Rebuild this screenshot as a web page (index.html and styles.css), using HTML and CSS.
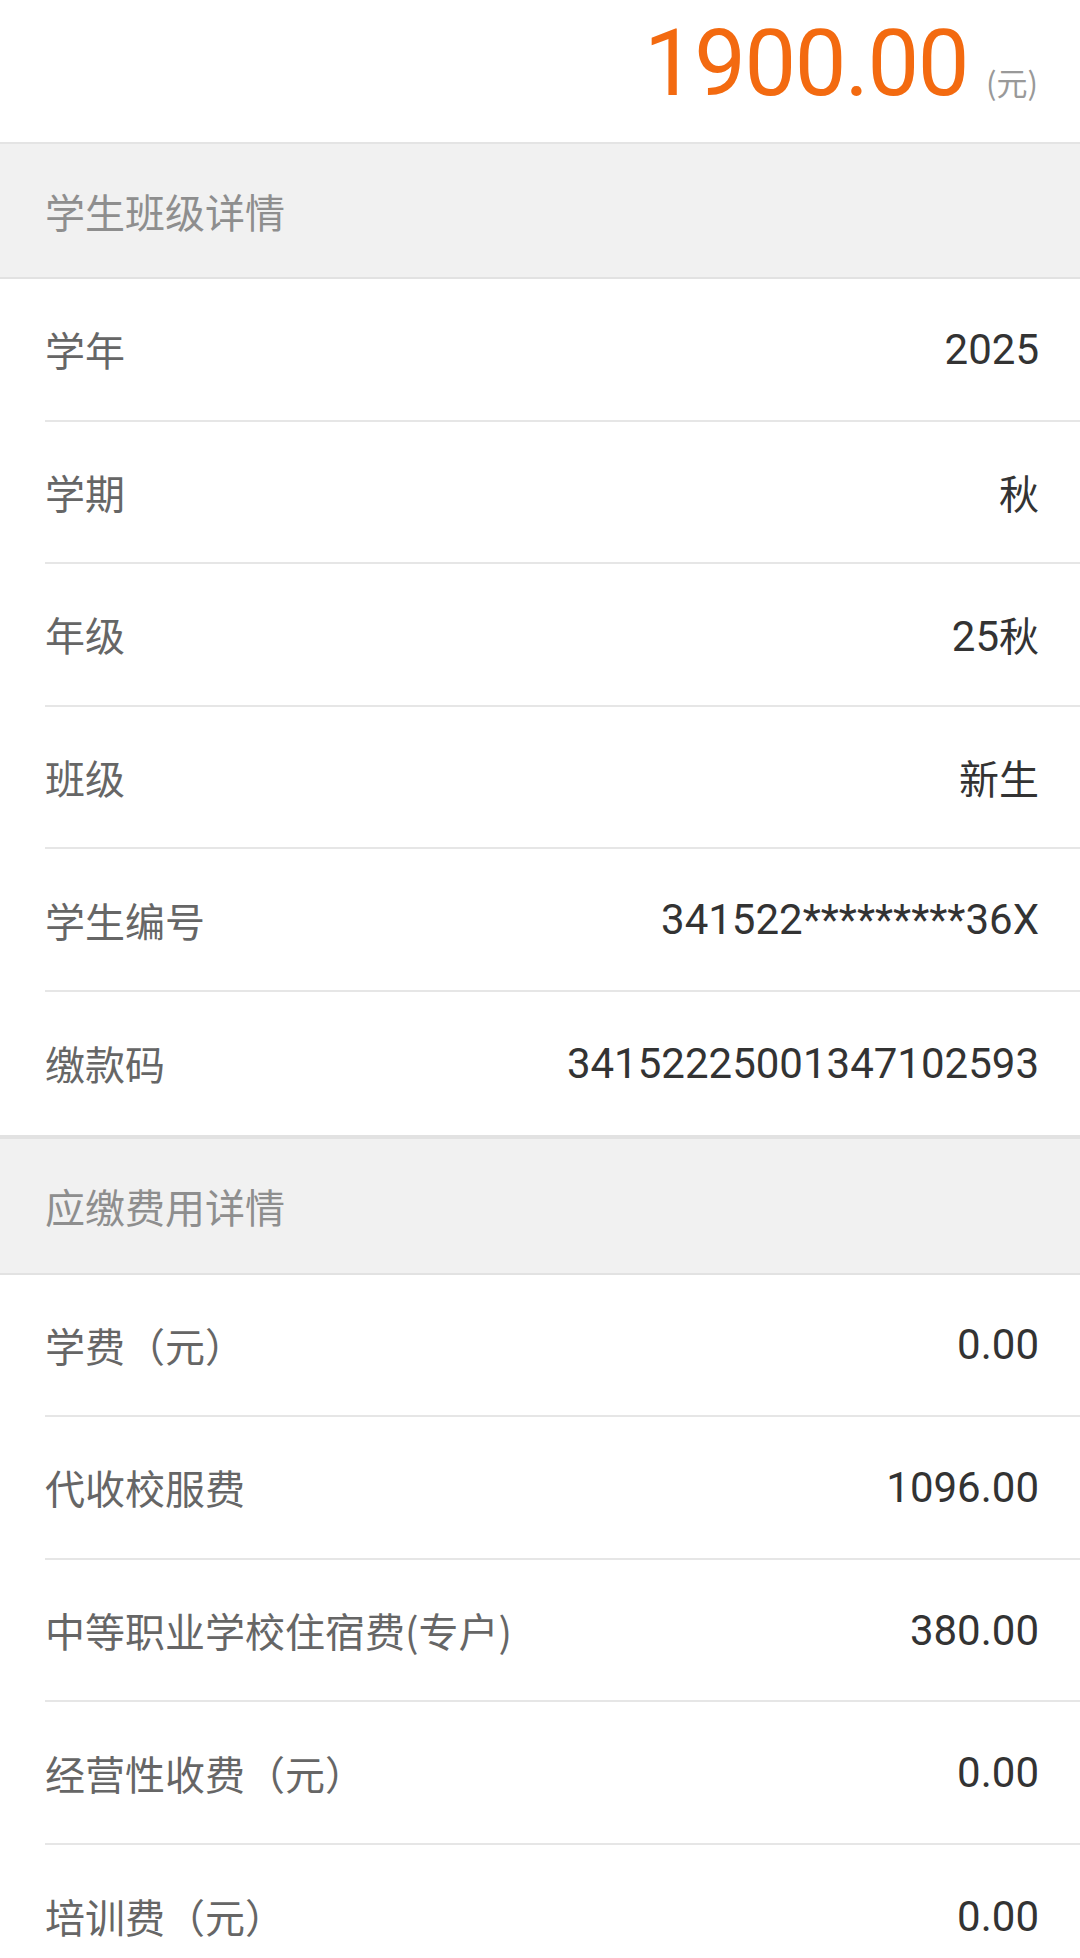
FILE: index.html
```html
<!DOCTYPE html>
<html lang="zh-CN">
<head>
    <meta charset="UTF-8">
    <meta name="viewport" content="width=device-width, initial-scale=1.0">
    <title>缴费详情</title>
    <link rel="stylesheet" href="styles.css">
</head>
<body>
    <div class="amount-bar">
        <span class="amount">1900.00</span>
        <span class="unit">(元)</span>
    </div>

    <div class="section-title first">学生班级详情</div>
    <div class="list">
        <div class="row"><span class="label">学年</span><span class="value num">2025</span></div>
        <div class="row"><span class="label">学期</span><span class="value">秋</span></div>
        <div class="row"><span class="label">年级</span><span class="value"><span class="num">25</span>秋</span></div>
        <div class="row"><span class="label">班级</span><span class="value">新生</span></div>
        <div class="row"><span class="label">学生编号</span><span class="value num">341522*********36X</span></div>
        <div class="row"><span class="label">缴款码</span><span class="value num">34152225001347102593</span></div>
    </div>

    <div class="section-title">应缴费用详情</div>
    <div class="list">
        <div class="row"><span class="label">学费（元）</span><span class="value num">0.00</span></div>
        <div class="row"><span class="label">代收校服费</span><span class="value num">1096.00</span></div>
        <div class="row"><span class="label">中等职业学校住宿费(专户)</span><span class="value num">380.00</span></div>
        <div class="row"><span class="label">经营性收费（元）</span><span class="value num">0.00</span></div>
        <div class="row"><span class="label">培训费（元）</span><span class="value num">0.00</span></div>
    </div>
</body>
</html>
```

FILE: styles.css
```css
body {
    margin: 0;
    background-color: #fff;
    font-family: "Noto Sans CJK SC", "Noto Sans", sans-serif;
    color: #333;
    overflow: hidden;
}

.amount-bar {
    height: 144px;
    display: flex;
    justify-content: flex-end;
    align-items: baseline;
    padding: 0 42px 0 0;
    border-bottom: 2px solid #e4e4e4;
    box-sizing: border-box;
}

.amount {
    font-family: Roboto, "Noto Sans", sans-serif;
    font-size: 92px;
    line-height: 128px;
    color: #f36a10;
    letter-spacing: -1.5px;
}

.unit {
    font-size: 31px;
    color: #999;
    margin-left: 18px;
}

.section-title {
    height: 140px;
    display: flex;
    align-items: center;
    padding-left: 45px;
    background-color: #f1f1f1;
    border-top: 4px solid #e2e2e2;
    border-bottom: 2px solid #e2e2e2;
    font-size: 40px;
    color: #8e8e8e;
    box-sizing: border-box;
}

.section-title.first {
    height: 135px;
    border-top: none;
}

.list {
    padding-left: 45px;
}

.row {
    height: 142.6px;
    display: flex;
    justify-content: space-between;
    align-items: center;
    padding-right: 41px;
    border-bottom: 2px solid #e6e6e6;
    box-sizing: border-box;
}

.row:last-child {
    border-bottom: none;
}

.label {
    font-size: 40px;
    color: #666;
}

.value {
    font-size: 40px;
    color: #333;
}

.num {
    font-family: Roboto, "Noto Sans", sans-serif;
    font-size: 42px;
}
```
